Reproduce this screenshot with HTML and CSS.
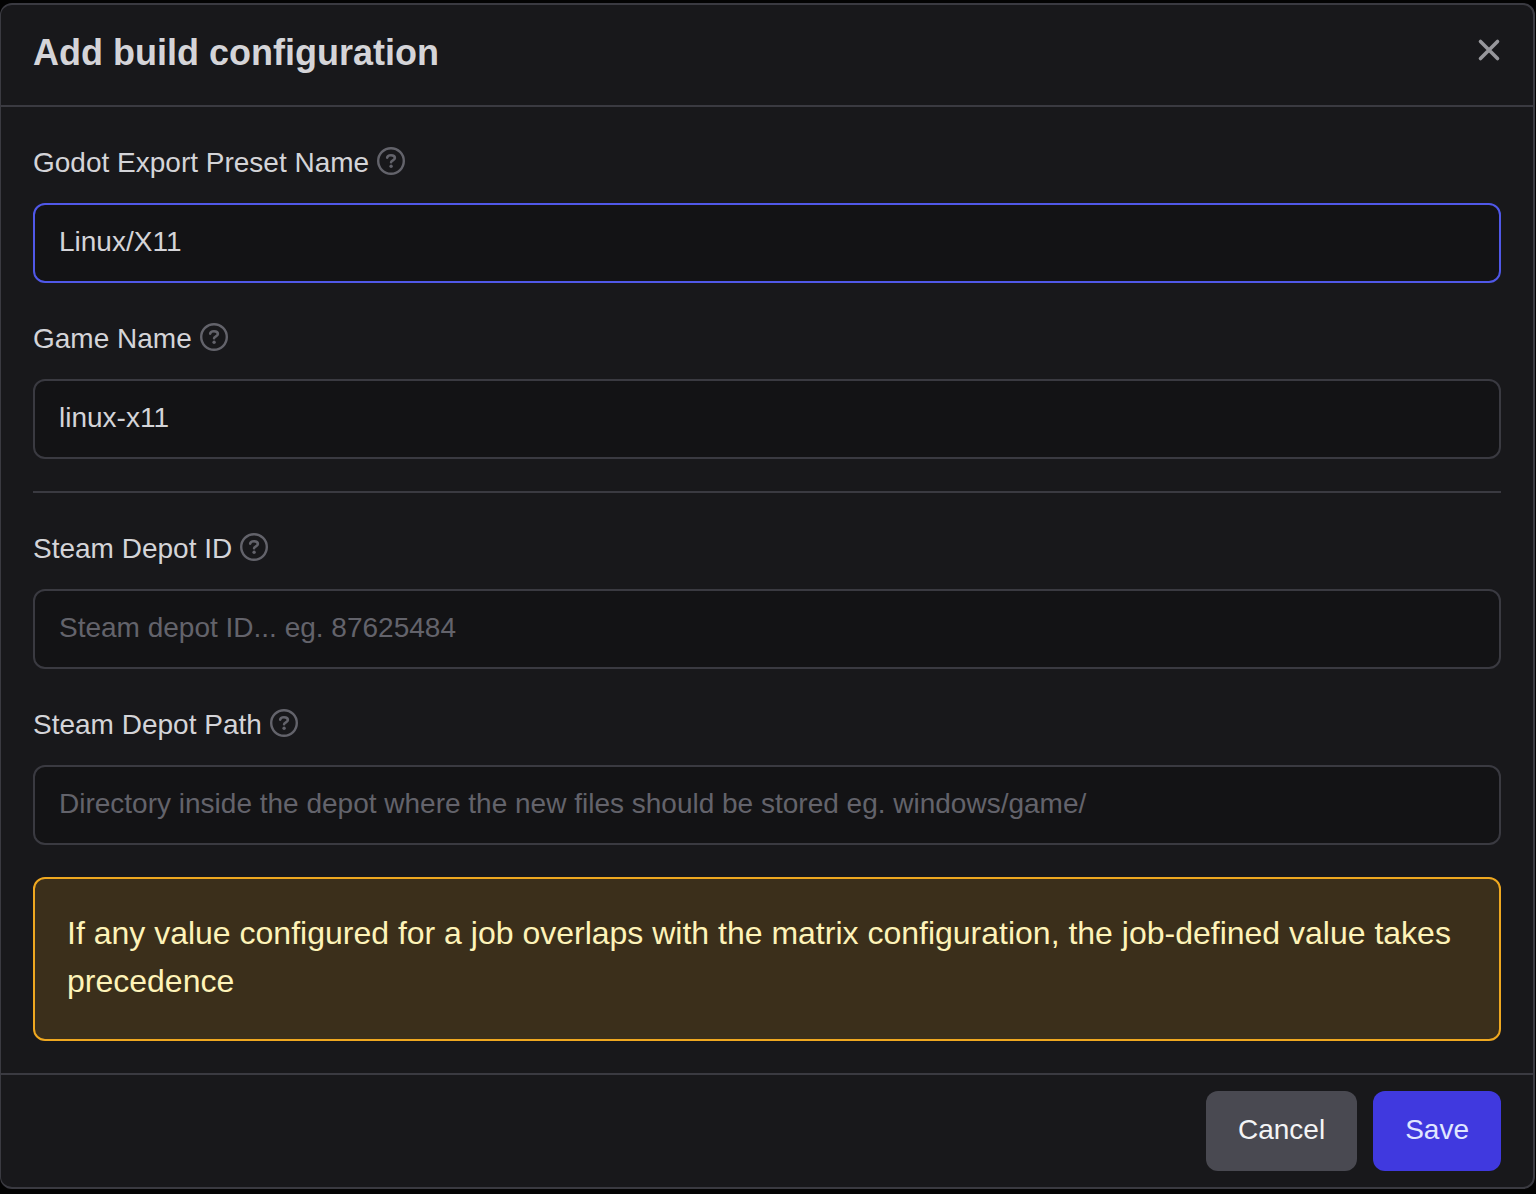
FILE: index.html
```html
<!DOCTYPE html>
<html lang="en">
<head>
  <title>Add build configuration</title>
  <meta charset="utf-8" />
  <meta name="viewport" content="width=device-width, initial-scale=1.0" />
  <link rel="stylesheet" href="styles.css">
</head>
<body>
<svg class="sprite" aria-hidden="true">
  <symbol id="help" viewBox="0 0 28 28">
    <circle cx="14" cy="14" r="12.8" fill="none" stroke="currentColor" stroke-width="2.4" />
    <path d="M10.200 10.600C10.400 8.800 11.800 8.200 14 8.200s3.900 1 3.900 2.900c0 2.200-3.800 2.200-3.800 4.200" fill="none" stroke="currentColor" stroke-width="2.600" stroke-linecap="round" />
    <circle cx="14.1" cy="19.300" r="1.700" fill="currentColor" />
  </symbol>
</svg>
<form class="modal" role="dialog" aria-labelledby="title">
  <header class="modal-header">
    <h1 id="title">Add build configuration</h1>
    <button type="button" class="close" aria-label="Close">
      <svg width="24" height="24" viewBox="0 0 24 24"><path d="M3.500 3.500l17 17M20.500 3.500l-17 17" fill="none" stroke="currentColor" stroke-width="3.600" stroke-linecap="round" /></svg>
    </button>
  </header>
  <div class="modal-body">
    <div class="field">
      <div class="label">
        <label for="preset">Godot Export Preset Name</label>
        <svg class="help"><use href="#help" /></svg>
      </div>
      <input class="active" id="preset" type="text" value="Linux/X11">
    </div>
    <div class="field">
      <div class="label">
        <label for="game">Game Name</label>
        <svg class="help"><use href="#help" /></svg>
      </div>
      <input id="game" type="text" value="linux-x11">
    </div>
    <hr>
    <div class="field">
      <div class="label">
        <label for="depot">Steam Depot ID</label>
        <svg class="help"><use href="#help" /></svg>
      </div>
      <input id="depot" type="text" placeholder="Steam depot ID... eg. 87625484">
    </div>
    <div class="field">
      <div class="label">
        <label for="path">Steam Depot Path</label>
        <svg class="help"><use href="#help" /></svg>
      </div>
      <input id="path" type="text" placeholder="Directory inside the depot where the new files should be stored eg. windows/game/">
    </div>
    <p class="alert">If any value configured for a job overlaps with the matrix configuration, the job-defined value takes precedence</p>
  </div>
  <footer class="modal-footer">
    <button type="button" class="button">Cancel</button>
    <button type="submit" class="button primary">Save</button>
  </footer>
</form>
</body>
</html>
```

FILE: styles.css
```css
* {
  box-sizing: border-box;
}

body {
  margin: 0;
  padding: 3px 1px 5px 0;
  background: #030303;
  color: #d4d4d8;
  font-family: "Liberation Sans", Arial, sans-serif;
  font-size: 28px;
}

h1, p {
  margin: 0;
}

input, button {
  font: inherit;
}

.sprite {
  display: none;
}

.modal {
  background: #18181b;
  border: 2px solid #3a3a41;
  border-left-width: 1px;
  border-radius: 12px;
}

.modal-header {
  display: flex;
  align-items: center;
  justify-content: space-between;
  padding: 24px 32px 28px;
  border-bottom: 2px solid #3a3a41;
}

.modal-header h1 {
  font-size: 36px;
  line-height: 48px;
}

.close {
  display: flex;
  padding: 0 0 6px;
  border: 0;
  background: none;
  color: #97979c;
  cursor: pointer;
}

.modal-body {
  display: flex;
  flex-direction: column;
  gap: 32px;
  padding: 32px;
}

.field {
  display: flex;
  flex-direction: column;
  gap: 16px;
}

.label {
  display: flex;
  align-items: center;
  gap: 8px;
  height: 48px;
  padding-bottom: 4px;
}

.label label {
  padding-top: 4px;
}

.help {
  width: 28px;
  height: 28px;
  color: #63636b;
}

.field input {
  width: 100%;
  height: 80px;
  padding: 0 24px 2px;
  border: 2px solid #3a3a41;
  border-radius: 12px;
  outline: 0;
  background: #131315;
  color: #d4d4d8;
}

.field input.active, .field input:focus {
  border-color: #5058e8;
}

.field input::placeholder {
  color: #63636b;
  opacity: 1;
}

hr {
  width: 100%;
  height: 2px;
  margin: 0;
  border: 0;
  background: #3a3a41;
}

.alert {
  padding: 30px 32px 34px;
  border: 2px solid #efa820;
  border-radius: 12px;
  background: #3b2f1b;
  color: #fef3b8;
  font-size: 32px;
  line-height: 48px;
}

.modal-footer {
  display: flex;
  justify-content: flex-end;
  gap: 16px;
  padding: 16px 32px;
  border-top: 2px solid #3a3a41;
}

.button {
  height: 80px;
  padding: 0 32px 2px;
  border: 0;
  border-radius: 12px;
  background: #494951;
  color: #f4f4f5;
  cursor: pointer;
}

.button.primary {
  background: #4039df;
  color: #e0e7ff;
}
```
